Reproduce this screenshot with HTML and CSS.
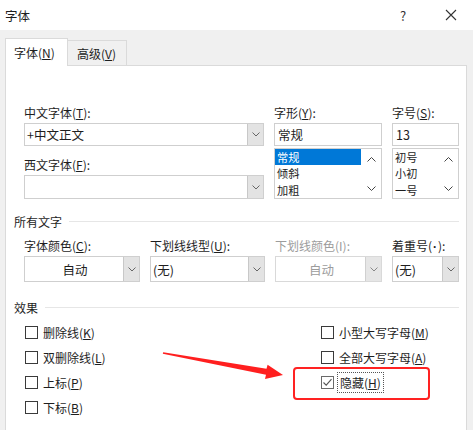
FILE: index.html
```html
<!DOCTYPE html>
<html lang="zh-CN">
<head>
<meta charset="utf-8">
<title>字体</title>
<link rel="stylesheet" href="styles.css">
</head>
<body>
<div class="titlebar">
  <span class="title">字体</span>
  <span class="help">?</span>
  <span class="close"><svg width="12" height="12" viewBox="0 0 12 12"><path d="M1 1L11 11M11 1L1 11" stroke="#333" stroke-width="1.1" fill="none"/></svg></span>
</div>
<div class="tabs">
  <div class="tab active">字体(<u>N</u>)</div>
  <div class="tab">高级(<u>V</u>)</div>
</div>
<div class="panel">
  <div class="font-grid">
    <div class="col">
      <div class="lbl">中文字体(<u>T</u>):</div>
      <div class="combo h23"><span class="combo-value">+中文正文</span><span class="combo-btn"><svg width="8" height="5" viewBox="0 0 8 5"><path d="M0.5 0.5L4 4L7.5 0.5" stroke="#666" fill="none"/></svg></span></div>
      <div class="lbl lbl2">西文字体(<u>F</u>):</div>
      <div class="combo h24"><span class="combo-value"></span><span class="combo-btn"><svg width="8" height="5" viewBox="0 0 8 5"><path d="M0.5 0.5L4 4L7.5 0.5" stroke="#666" fill="none"/></svg></span></div>
    </div>
    <div class="col">
      <div class="lbl">字形(<u>Y</u>):</div>
      <div class="textbox">常规</div>
      <div class="listbox">
        <div class="items">
          <div class="item sel">常规</div>
          <div class="item">倾斜</div>
          <div class="item">加粗</div>
        </div>
        <div class="scroll">
          <svg width="9" height="5" viewBox="0 0 9 5"><path d="M0.5 4.5L4.5 0.5L8.5 4.5" stroke="#444" fill="none"/></svg>
          <svg width="9" height="5" viewBox="0 0 9 5"><path d="M0.5 0.5L4.5 4.5L8.5 0.5" stroke="#444" fill="none"/></svg>
        </div>
      </div>
    </div>
    <div class="col">
      <div class="lbl">字号(<u>S</u>):</div>
      <div class="textbox">13</div>
      <div class="listbox">
        <div class="items">
          <div class="item">初号</div>
          <div class="item">小初</div>
          <div class="item">一号</div>
        </div>
        <div class="scroll">
          <svg width="9" height="5" viewBox="0 0 9 5"><path d="M0.5 4.5L4.5 0.5L8.5 4.5" stroke="#444" fill="none"/></svg>
          <svg width="9" height="5" viewBox="0 0 9 5"><path d="M0.5 0.5L4.5 4.5L8.5 0.5" stroke="#444" fill="none"/></svg>
        </div>
      </div>
    </div>
  </div>

  <div class="section-head head-all"><span>所有文字</span><i class="rule"></i></div>

  <div class="attr-grid">
    <div class="col">
      <div class="lbl">字体颜色(<u>C</u>):</div>
      <div class="combo h26"><span class="combo-value center">自动</span><span class="combo-btn"><svg width="8" height="5" viewBox="0 0 8 5"><path d="M0.5 0.5L4 4L7.5 0.5" stroke="#666" fill="none"/></svg></span></div>
    </div>
    <div class="col">
      <div class="lbl">下划线线型(<u>U</u>):</div>
      <div class="combo h26"><span class="combo-value">(无)</span><span class="combo-btn"><svg width="8" height="5" viewBox="0 0 8 5"><path d="M0.5 0.5L4 4L7.5 0.5" stroke="#666" fill="none"/></svg></span></div>
    </div>
    <div class="col disabled">
      <div class="lbl">下划线颜色(I):</div>
      <div class="combo h26"><span class="combo-value center">自动</span><span class="combo-btn"><svg width="8" height="5" viewBox="0 0 8 5"><path d="M0.5 0.5L4 4L7.5 0.5" stroke="#888" fill="none"/></svg></span></div>
    </div>
    <div class="col">
      <div class="lbl">着重号(<span class="latin">·</span>):</div>
      <div class="combo h26"><span class="combo-value">(无)</span><span class="combo-btn"><svg width="8" height="5" viewBox="0 0 8 5"><path d="M0.5 0.5L4 4L7.5 0.5" stroke="#666" fill="none"/></svg></span></div>
    </div>
  </div>

  <div class="section-head head-fx"><span>效果</span><i class="rule"></i></div>

  <div class="effects">
    <label class="check"><span class="box"></span>删除线(<u>K</u>)</label>
    <label class="check"><span class="box"></span>小型大写字母(<u>M</u>)</label>
    <label class="check"><span class="box"></span>双删除线(<u>L</u>)</label>
    <label class="check"><span class="box"></span>全部大写字母(<u>A</u>)</label>
    <label class="check"><span class="box"></span>上标(<u>P</u>)</label>
    <label class="check"><span class="box checked"><svg width="11" height="11" viewBox="0 0 11 11"><path d="M1.5 5.5L4.2 8.2L9.5 2.2" stroke="#555" stroke-width="1.1" fill="none"/></svg></span><span class="focus">隐藏(<u>H</u>)</span></label>
    <label class="check"><span class="box"></span>下标(<u>B</u>)</label>
  </div>
</div>

<div class="annot-box"></div>
<svg class="annot-arrow" width="473" height="430" viewBox="0 0 473 430">
  <polygon points="163.2,352.2 266.5,368.8 267.6,364.8 283,375 265,379 266,374.8 162.8,353.8" fill="#ff1f1f"/>
</svg>
</body>
</html>
```

FILE: styles.css
```css
* { box-sizing: border-box; }

html, body {
  margin: 0;
  padding: 0;
}

body {
  width: 473px;
  height: 430px;
  overflow: hidden;
  background: #f0f0f0;
  font-family: "Noto Sans CJK SC", "Noto Sans", "Liberation Sans", sans-serif;
  font-size: 12px;
  line-height: 17px;
  color: #1e1e1e;
  position: relative;
}

u { text-decoration: underline; text-underline-offset: 1px; }

.latin { font-family: "Liberation Sans", sans-serif; font-weight: bold; padding: 0 1px; }

.titlebar {
  height: 30px;
  background: #ffffff;
  display: flex;
  align-items: center;
  padding-left: 5px;
}

.title { flex: 1; font-size: 12.5px; }

.help {
  font-size: 13px;
  width: 10px;
  margin-right: 37px;
  color: #333;
  padding-left: 2px;
}

.close {
  display: flex;
  margin-right: 16px;
}

.tabs {
  margin-top: 8px;
  height: 27px;
  display: flex;
  align-items: flex-end;
  padding-left: 5px;
}

.tab {
  height: 25px;
  padding: 0 9px;
  display: flex;
  align-items: center;
  background: #f0f0f0;
  border: 1px solid #dadada;
  border-left: none;
  border-bottom: none;
  width: 59px;
}

.tab.active {
  width: 63px;
  height: 28px;
  margin-bottom: -1px;
  background: #ffffff;
  border-left: 1px solid #dadada;
  position: relative;
  z-index: 1;
  padding-left: 8px;
}

.panel {
  margin-left: 5px;
  width: 462px;
  height: 380px;
  background: #ffffff;
  border: 1px solid #dadada;
  padding: 38px 7px 0 8px;
}

.font-grid {
  display: grid;
  grid-template-columns: 240px 108px 67px;
  column-gap: 10px;
  padding-left: 10px;
}

.col { display: flex; flex-direction: column; }

.lbl { height: 17px; margin-bottom: 2px; white-space: nowrap; }
.lbl2 { margin-top: 10px; }

.combo {
  display: flex;
  border: 1px solid #cfcfcf;
  background: #ffffff;
}
.h23 { height: 23px; }
.h24 { height: 24px; }
.h26 { height: 26px; }

.combo-value {
  flex: 1;
  display: flex;
  align-items: center;
  padding-left: 2px;
  font-size: 12.5px;
}
.combo-value.center { justify-content: center; }

.combo-btn {
  width: 16px;
  background: #e3e3e3;
  border-left: 1px solid #c8c8c8;
  display: flex;
  align-items: center;
  justify-content: center;
}

.textbox {
  height: 23px;
  border: 1px solid #cfcfcf;
  display: flex;
  align-items: center;
  padding-left: 3px;
  font-size: 12.5px;
  margin-bottom: 2px;
}

.listbox {
  height: 51px;
  border: 1px solid #cfcfcf;
  display: flex;
  overflow: hidden;
}

.items { flex: 1; }

.item {
  height: 16.3px;
  line-height: 16.3px;
  padding-left: 2px;
  font-size: 11.2px;
  overflow: hidden;
}
.item.sel { background: #0078d7; color: #ffffff; }

.scroll {
  width: 20px;
  display: flex;
  flex-direction: column;
  justify-content: space-between;
  align-items: center;
  padding: 8px 0 7px;
}

.section-head {
  display: flex;
  align-items: center;
  height: 17px;
}
.section-head .rule {
  flex: 1;
  height: 1px;
  background: #e6e6e6;
  margin-left: 7px;
}
.head-all { margin-top: 14px; }
.head-fx { margin-top: 17px; }

.attr-grid {
  margin-top: 7px;
  display: grid;
  grid-template-columns: 116px 115px 107px 67px;
  column-gap: 10px;
  padding-left: 10px;
}

.disabled { color: #9c9c9c; }
.disabled .combo { border-color: #d9d9d9; }
.disabled .combo-btn { background: #e6e6e6; border-left-color: #d0d0d0; }

.effects {
  margin-top: 4px;
  padding-left: 11px;
  display: grid;
  grid-template-columns: 296px 1fr;
  grid-auto-rows: 25px;
}

.check {
  display: flex;
  align-items: center;
  white-space: nowrap;
}

.box {
  width: 13px;
  height: 13px;
  border: 1px solid #3a3a3a;
  background: #ffffff;
  margin-right: 5px;
  display: flex;
  align-items: center;
  justify-content: center;
}
.box.checked { border-color: #6a6a6a; }

.focus {
  outline: 1px dotted #555;
  outline-offset: 1px;
  padding: 0 1px;
}

.annot-box {
  position: absolute;
  left: 293px;
  top: 367px;
  width: 137px;
  height: 33px;
  border: 2px solid #ff2222;
  border-radius: 4px;
}

.annot-arrow {
  position: absolute;
  left: 0;
  top: 0;
  pointer-events: none;
}
```
